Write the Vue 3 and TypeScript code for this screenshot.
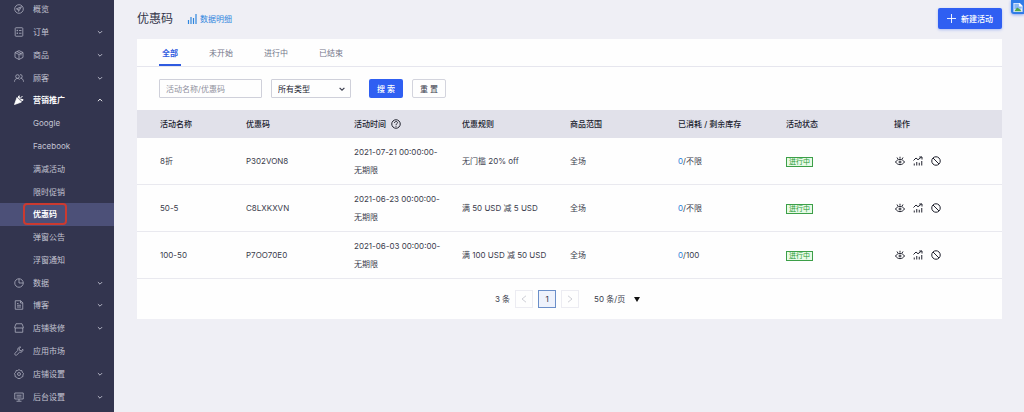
<script setup lang="ts">
import { ref } from 'vue'

interface NavItem {
  label: string
  icon?: string
  arrow?: 'down' | 'up'
  state?: 'open' | 'active'
}

interface Coupon {
  name: string
  code: string
  start: string
  end: string
  rule: string
  scope: string
  used: string
  stock: string
  status: string
}

const nav: NavItem[] = [
  { label: '概览', icon: 'compass' },
  { label: '订单', icon: 'order', arrow: 'down' },
  { label: '商品', icon: 'box', arrow: 'down' },
  { label: '顾客', icon: 'users', arrow: 'down' },
  { label: '营销推广', icon: 'promo', arrow: 'up', state: 'open' },
  { label: 'Google' },
  { label: 'Facebook' },
  { label: '满减活动' },
  { label: '限时促销' },
  { label: '优惠码', state: 'active' },
  { label: '弹窗公告' },
  { label: '浮窗通知' },
  { label: '数据', icon: 'pie', arrow: 'down' },
  { label: '博客', icon: 'blog', arrow: 'down' },
  { label: '店铺装修', icon: 'store', arrow: 'down' },
  { label: '应用市场', icon: 'wrench' },
  { label: '店铺设置', icon: 'gear', arrow: 'down' },
  { label: '后台设置', icon: 'monitor', arrow: 'down' },
]

const tabs = ['全部', '未开始', '进行中', '已结束']
const activeTab = ref(0)
const keyword = ref('')

const coupons: Coupon[] = [
  { name: '8折', code: 'P302VON8', start: '2021-07-21 00:00:00-', end: '无期限', rule: '无门槛 20% off', scope: '全场', used: '0', stock: '不限', status: '进行中' },
  { name: '50-5', code: 'C8LXKXVN', start: '2021-06-23 00:00:00-', end: '无期限', rule: '满 50 USD 减 5 USD', scope: '全场', used: '0', stock: '不限', status: '进行中' },
  { name: '100-50', code: 'P7OO70E0', start: '2021-06-03 00:00:00-', end: '无期限', rule: '满 100 USD 减 50 USD', scope: '全场', used: '0', stock: '100', status: '进行中' },
]
</script>

<template>
  <div class="layout">
    <nav class="sidebar" aria-label="主导航">
      <ul class="menu">
        <li v-for="item in nav" :key="item.label" class="menu-item" :class="item.state">
          <a href="#" class="menu-link">
            <span class="menu-icon">
              <svg v-if="item.icon" viewBox="0 0 20 20" aria-hidden="true">
                <template v-if="item.icon === 'compass'">
                  <circle cx="10" cy="10" r="8.6" />
                  <path d="M15 5.5 4.8 9.6l3.4 1.8 1 3.4zM8.2 11.4l3-2.6" />
                </template>
                <template v-else-if="item.icon === 'order'">
                  <rect x="2.4" y="1.5" width="15.2" height="17" rx="1.5" />
                  <path d="M5.5 7h2M10 7h5M5.5 12.5h2M10 12.5h5M6.5 5.5v3M6.5 11v3" />
                </template>
                <template v-else-if="item.icon === 'box'">
                  <path d="M10 1.2 18 5v9.8L10 19l-8-4.2V5zM2 5l8 4 8-4M10 9v10M6 3l8 4v4" />
                </template>
                <template v-else-if="item.icon === 'users'">
                  <circle cx="7" cy="7" r="3.6" />
                  <path d="M1 17.5c0-4 2.5-6.5 6-6.5 2 0 3.4.8 4.4 2M12 3.4a3.6 3.6 0 1 1 1 7.1c3.5 0 6 2.8 6 7" />
                </template>
                <template v-else-if="item.icon === 'promo'">
                  <path class="solid" d="M6 5 15 14 1 19zM8 4l2-2 1.5 5zM13 8l5 1.5-1.5 2.5z" />
                  <path class="thick" d="M12 7l5-5M9 5c0-2 .5-3 1.5-4M13.5 9.5c1-.8 3-1 5 0" />
                </template>
                <template v-else-if="item.icon === 'pie'">
                  <circle cx="10" cy="10" r="8.5" />
                  <path d="M10 1.5V10h8.5" />
                </template>
                <template v-else-if="item.icon === 'blog'">
                  <path d="M2.5 1.5h11l4 4v13h-15zM13 1.5V6h4.5M6 7h3M6 10.5h8M6 14h8" />
                </template>
                <template v-else-if="item.icon === 'store'">
                  <path d="M4 1.5h12L18.5 8v2h-17V8zM2.5 10v8.5h15V10" />
                </template>
                <template v-else-if="item.icon === 'wrench'">
                  <path d="M13.5 2.2a5 5 0 0 0-5.8 6.5L2 14.5a2.5 2.5 0 0 0 3.5 3.5l5.8-5.7a5 5 0 0 0 6.5-5.8l-3.2 3-3.6-.9-.8-3.5z" />
                </template>
                <template v-else-if="item.icon === 'gear'">
                  <path d="m10 1 2.5 2 3.2.2.8 3.1L19 9l-1.2 3 .1 3.2-3 1L12.5 19h-5l-2.4-2.8-3-1 .1-3.2L1 9l2.500-2.700.8-3.100L7.500 3z" />
                  <circle cx="10" cy="10" r="3" />
                </template>
                <template v-else>
                  <path d="M1.5 2h17v12h-17zM10 14v4M5 18.5h10M5 6.5h10M5 10h10" />
                </template>
              </svg>
            </span>
            <span class="menu-label">{{ item.label }}</span>
            <svg v-if="item.arrow" class="menu-arrow" viewBox="0 0 10 10" aria-hidden="true">
              <path :d="item.arrow === 'up' ? 'M1.5 7 5 3.5 8.5 7' : 'M1.5 3.5 5 7 8.5 3.5'" />
            </svg>
          </a>
        </li>
      </ul>
    </nav>

    <main class="content">
      <header class="page-head">
        <h1>优惠码</h1>
        <a href="#" class="detail-link">
          <svg viewBox="0 0 10 10" aria-hidden="true"><path d="M1.5 6v4M4 3v7M6.5 4v6M9 0v10" /></svg>
          数据明细
        </a>
        <button type="button" class="btn primary create">
          <svg viewBox="0 0 10 10" aria-hidden="true"><path d="M5 0v10M0 5h10" /></svg>
          新建活动
        </button>
      </header>

      <section class="card">
        <div class="tabs" role="tablist">
          <button
            v-for="(tab, i) in tabs"
            :key="tab"
            type="button"
            role="tab"
            class="tab"
            :class="{ selected: i === activeTab }"
            :aria-selected="i === activeTab"
            @click="activeTab = i"
          >{{ tab }}</button>
        </div>

        <form class="filters" @submit.prevent>
          <input v-model="keyword" type="text" class="field" placeholder="活动名称/优惠码" aria-label="活动名称/优惠码" />
          <span class="select-box">
            <select class="field" aria-label="类型"><option>所有类型</option></select>
            <svg viewBox="0 0 10 10" aria-hidden="true"><path d="M1 3l4 4 4-4" /></svg>
          </span>
          <button type="submit" class="btn primary search">搜 索</button>
          <button type="reset" class="btn reset">重 置</button>
        </form>

        <table>
          <thead>
            <tr>
              <th class="first">活动名称</th>
              <th>优惠码</th>
              <th>
                <span class="with-help">
                  活动时间
                  <svg viewBox="0 0 20 20" aria-hidden="true">
                    <circle cx="10" cy="10" r="8.5" />
                    <path d="M7 8c0-4 6-4 6-.5 0 2-3 2-3 4.5M10 13.5v2" />
                  </svg>
                </span>
              </th>
              <th>优惠规则</th>
              <th>商品范围</th>
              <th>已消耗 / 剩余库存</th>
              <th>活动状态</th>
              <th>操作</th>
            </tr>
          </thead>
          <tbody>
            <tr v-for="c in coupons" :key="c.code">
              <td class="first">{{ c.name }}</td>
              <td>{{ c.code }}</td>
              <td>{{ c.start }}<br />{{ c.end }}</td>
              <td>{{ c.rule }}</td>
              <td>{{ c.scope }}</td>
              <td><a href="#" class="used">{{ c.used }}</a>/{{ c.stock }}</td>
              <td><span class="tag">{{ c.status }}</span></td>
              <td>
                <div class="actions">
                  <button type="button" aria-label="查看">
                    <svg viewBox="0 0 20 20">
                      <path d="M1 12c4.5-7 13.5-7 18 0-4.5 7-13.5 7-18 0zM10 1.5V5M4 3l1.8 3M16 3l-1.8 3" />
                      <circle cx="10" cy="12" r="2" />
                    </svg>
                  </button>
                  <button type="button" aria-label="数据">
                    <svg viewBox="0 0 20 20">
                      <path d="M1 9 6 4l4 3.5L17 2M12.5 2H18v5M2.5 15v4M7.5 12v7M12.5 13.5V19M17.5 10v9" />
                    </svg>
                  </button>
                  <button type="button" aria-label="停用">
                    <svg viewBox="0 0 20 20">
                      <circle cx="10" cy="10" r="8.5" />
                      <path d="m4 4 12 12" />
                    </svg>
                  </button>
                </div>
              </td>
            </tr>
          </tbody>
        </table>

        <footer class="pager">
          <span class="total">3 条</span>
          <button type="button" class="page" disabled aria-label="上一页">
            <svg viewBox="0 0 10 10"><path d="M7.5 1 2.5 5l5 4" /></svg>
          </button>
          <button type="button" class="page current">1</button>
          <button type="button" class="page" disabled aria-label="下一页">
            <svg viewBox="0 0 10 10"><path d="m2.5 1 5 4-5 4" /></svg>
          </button>
          <span class="page-size">
            <select aria-label="每页条数"><option>50 条/页</option></select>
            <svg viewBox="0 0 6 5" aria-hidden="true"><path d="M0 0h6L3 5z" /></svg>
          </span>
        </footer>
      </section>
    </main>

    <button type="button" class="float-badge" aria-label="客服">
      <svg viewBox="0 0 12 12" aria-hidden="true">
        <path fill="#e6efff" d="M1 1h7l3 3v7H1z" />
        <path fill="#8bb8f5" d="M2 2h5v3h3v2L2 8z" />
        <path fill="#4fa64a" d="m2 10 3-4 3 2 2 2z" />
        <path fill="#fff" d="M7.5 1v3.5H11z" />
      </svg>
    </button>
  </div>
</template>

<style>
body {
  margin: 0;
  background: #efeff5;
}
</style>

<style scoped>
.layout {
  display: flex;
  min-height: 100vh;
  overflow: hidden;
  position: relative;
  font-family: Inter, "Noto Sans CJK SC", sans-serif;
  font-size: 8px;
  line-height: 18px;
  color: #3a3c4c;
}
.layout *,
.layout *::after {
  box-sizing: border-box;
}
button,
input,
select {
  font: inherit;
  color: inherit;
  margin: 0;
  padding: 0;
  border: 0;
  background: none;
  border-radius: 0;
  appearance: none;
}
svg {
  display: block;
  fill: none;
  stroke: currentColor;
  flex: none;
}
a {
  text-decoration: none;
}

.sidebar {
  flex: 0 0 114px;
  background: #33354f;
}
.menu {
  list-style: none;
  margin: -2px 0 0;
  padding: 0;
  display: grid;
  grid-auto-rows: 1fr;
  height: calc(100vh - 2px);
}
.menu-item {
  display: flex;
}
.menu-link {
  flex: 1;
  display: flex;
  align-items: center;
  padding: 0 11px 0 14px;
  color: #c3c4d2;
}
.menu-icon {
  width: 19px;
}
.menu-icon svg {
  width: 10px;
  height: 10px;
  stroke-width: 1.5;
  color: #b4b5c6;
}
.menu-label {
  flex: 1;
}
.menu-arrow {
  width: 6px;
  height: 6px;
  stroke-width: 1.5;
}
.open .menu-link,
.open .menu-icon svg,
.active .menu-link {
  color: #fff;
  font-weight: 600;
}
.solid {
  fill: currentColor;
}
.thick {
  stroke-width: 2;
}
.active {
  position: relative;
  background: #4c5078;
}
.active::after {
  content: "";
  position: absolute;
  top: 0;
  bottom: 1px;
  left: 23px;
  width: 44px;
  border: 2px solid #cb3a30;
  border-radius: 4px;
}

.content {
  flex: 1;
  min-width: 0;
  padding: 8px 22px 0 23px;
}
.page-head {
  display: flex;
  align-items: center;
  height: 21px;
  margin-bottom: 10px;
}
h1 {
  margin: 0;
  font-size: 12px;
  font-weight: 400;
  color: #33354a;
}
.detail-link {
  display: flex;
  align-items: center;
  gap: 3px;
  margin-left: 14px;
  color: #2f86de;
}
.detail-link svg {
  width: 10px;
  height: 10px;
  stroke-width: 1.2;
}
.btn {
  display: flex;
  align-items: center;
  justify-content: center;
  height: 19px;
  border-radius: 2px;
}
.primary {
  background: #2f5ff2;
  color: #fff;
  font-weight: 500;
}
.create {
  margin-left: auto;
  width: 64px;
  height: 21px;
  gap: 5px;
  box-shadow: 0 1px 3px #2f5ff255;
}
.create svg {
  width: 9px;
  height: 9px;
}

.card {
  background: #fefefe;
  padding-bottom: 11px;
}
.tabs {
  display: flex;
  gap: 25px;
  height: 28px;
  padding: 0 22px;
  border-bottom: 1px solid #e6e6ee;
}
.tab {
  padding: 2px 3px 0;
  color: #74768a;
  border-bottom: 2px solid transparent;
}
.tab.selected {
  color: #2f5be0;
  font-weight: 600;
  border-bottom-color: #2f5be0;
}
.filters {
  display: flex;
  padding: 12px 22px;
}
.field {
  height: 19px;
  border: 1px solid #cfd0da;
  border-radius: 1px;
  padding: 0 6px;
}
input.field {
  width: 103px;
  margin-right: 9px;
}
.field::placeholder {
  color: #8f909d;
  opacity: 1;
}
.select-box {
  position: relative;
  width: 80px;
  margin-right: 18px;
}
.select-box .field {
  width: 100%;
  color: #222430;
}
.select-box svg {
  position: absolute;
  right: 6px;
  top: 7px;
  width: 6px;
  height: 6px;
  stroke-width: 2;
  pointer-events: none;
}
.search {
  width: 34px;
  margin-right: 9px;
}
.reset {
  width: 34px;
  border: 1px solid #d3d4dd;
}

table {
  width: 100%;
  table-layout: fixed;
  border-collapse: separate;
  border-spacing: 0;
}
th {
  height: 28px;
  padding: 0;
  background: #e1e1ea;
  text-align: left;
  font-weight: 500;
  color: #20222e;
}
td {
  padding: 5px 0;
  border-bottom: 1px solid #e9e9ef;
  white-space: nowrap;
}
.first {
  width: 109px;
  padding-left: 23px;
}
.with-help {
  display: flex;
  align-items: center;
  gap: 5px;
}
.with-help svg {
  width: 10px;
  height: 10px;
  stroke-width: 2;
}
.used {
  color: #2f7fd6;
}
.tag {
  display: inline-block;
  padding: 0 2px;
  font-size: 7px;
  line-height: 8px;
  border: 1px solid #3c9f48;
  background: #e6fae6;
  color: #2c9a38;
}
.actions {
  display: flex;
  gap: 8px;
  padding-left: 1px;
}
.actions svg {
  width: 10px;
  height: 10px;
  stroke-width: 2;
  color: #20222e;
}

.pager {
  display: flex;
  align-items: center;
  justify-content: center;
  gap: 5px;
  padding: 11px 4px 0 0;
}
.page {
  display: flex;
  align-items: center;
  justify-content: center;
  width: 18px;
  height: 18px;
  border: 1px solid #ececf2;
  color: #c2c3cc;
}
.page svg {
  width: 8px;
  height: 8px;
}
.page.current {
  border-color: #6b8fc9;
  background: #eef2fc;
  color: #33354a;
}
.page-size {
  display: flex;
  align-items: center;
  gap: 8px;
  margin-left: 10px;
}
.page-size svg {
  width: 6px;
  height: 5px;
  fill: #111;
  stroke: none;
}

.float-badge {
  position: absolute;
  top: 0;
  right: 0;
  width: 13px;
  height: 14px;
  padding: 1px;
  background: #2f7be8;
  border-radius: 0 0 0 3px;
  box-shadow: 0 1px 3px #2f5ff288;
}
.float-badge svg {
  width: 12px;
  height: 11px;
  stroke: none;
}
</style>
